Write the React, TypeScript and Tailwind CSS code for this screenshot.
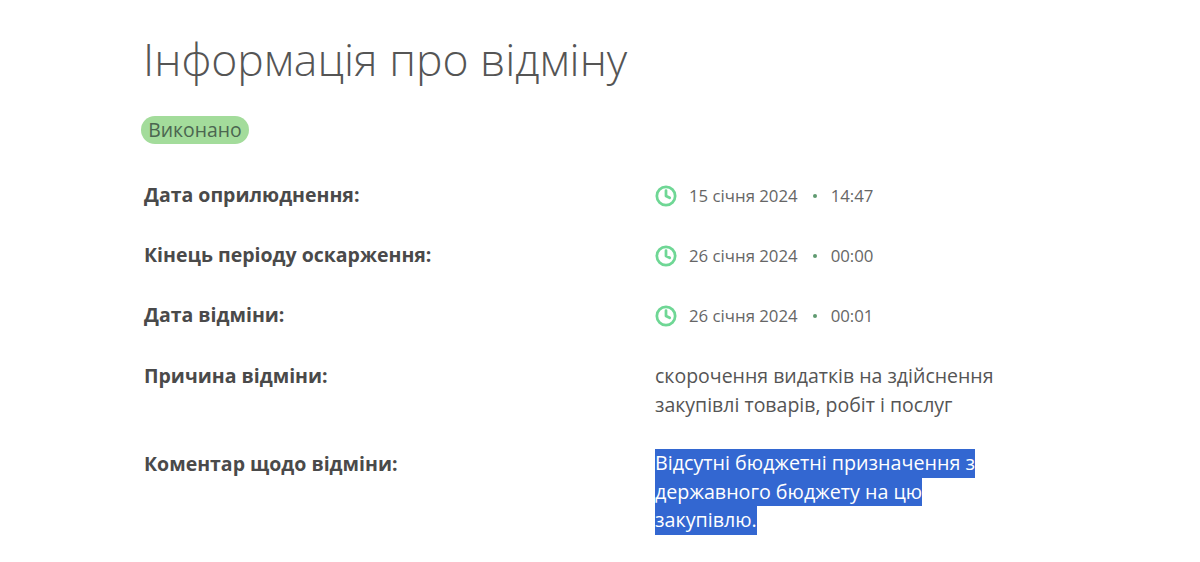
import { Clock } from "lucide-react";

const dates = [
  { label: "Дата оприлюднення:", date: "15 січня 2024", time: "14:47" },
  { label: "Кінець періоду оскарження:", date: "26 січня 2024", time: "00:00" },
  { label: "Дата відміни:", date: "26 січня 2024", time: "00:01" },
];

const comment = ["Відсутні бюджетні призначення з", "державного бюджету на цю", "закупівлю."];

export default function App() {
  return (
    <div className="h-[562px] w-[1200px] overflow-hidden bg-white pl-[144px] font-['Open_Sans',sans-serif] text-[#4a4a4a]">
      <h1 className="mt-[31px] ml-[-1px] text-[44.5px] leading-[56px] font-light text-[#555]">Інформація про відміну</h1>

      <span className="mt-[29px] ml-[-3px] flex h-[28px] w-[108px] items-center justify-center rounded-full bg-[#a3dc9b] text-[19.4px] text-[#4b6650]">
        Виконано
      </span>

      <div className="mt-[37px] flex flex-col gap-[32px]">
        {dates.map((row) => (
          <div key={row.label} className="flex h-[28px] items-center">
            <div className="w-[511px] text-[19.5px] font-bold">{row.label}</div>
            <div className="mt-[2px] flex items-center text-[16.8px] text-[#666]">
              <Clock className="h-[22px] w-[22px] text-[#6fd795]" strokeWidth={3} />
              <span className="ml-[12px]">{row.date}</span>
              <span className="mx-[14px] ml-[15px] h-[4px] w-[4px] rounded-full bg-[#5f9a70]" />
              <span>{row.time}</span>
            </div>
          </div>
        ))}
      </div>

      <div className="mt-[32px] flex">
        <div className="w-[511px] text-[19.5px] leading-[29px] font-bold">Причина відміни:</div>
        <div className="text-[19.5px] leading-[29px] text-[#555]">
          <div>скорочення видатків на здійснення</div>
          <div>закупівлі товарів, робіт і послуг</div>
        </div>
      </div>

      <div className="mt-[30px] flex">
        <div className="w-[511px] text-[19.5px] leading-[29px] font-bold">Коментар щодо відміни:</div>
        <div className="text-[19.7px] leading-[28.7px] text-white">
          {comment.map((line) => (
            <div key={line} className="w-fit bg-[#3367d1]">{line}</div>
          ))}
        </div>
      </div>
    </div>
  );
}
